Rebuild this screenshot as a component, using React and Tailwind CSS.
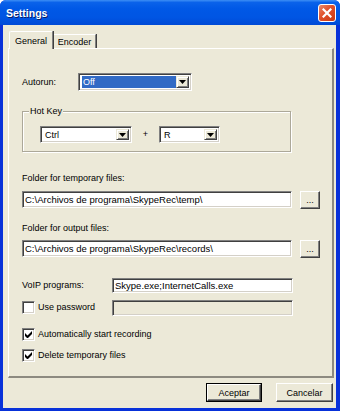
import React from "react";

const font = { fontFamily: '"Liberation Sans", Arial, sans-serif' };

function Arrow() {
  return (
    <svg width="7" height="4" viewBox="0 0 7 4">
      <path d="M0 0h7L3.5 4z" fill="#000" />
    </svg>
  );
}

function Combo({ w, h, text, selected }) {
  return (
    <div
      className={`flex bg-white border border-t-[#808080] border-l-[#808080] border-r-white border-b-white shadow-[inset_1px_1px_0_#404040,inset_-1px_-1px_0_#d4d0c8] p-[2px] ${w} ${h}`}
    >
      <div className="flex-1 flex items-center pl-[1px]">
        <span
          className={`leading-[12px] text-[9px] px-[1px] w-full h-full flex items-center ${
            selected ? "bg-[#316ac5] text-white" : "text-black"
          }`}
        >
          {text}
        </span>
      </div>
      <div className="w-[13px] flex items-center justify-center bg-[#ece9d8] border border-t-[#ece9d8] border-l-[#ece9d8] border-r-[#404040] border-b-[#404040] shadow-[inset_1px_1px_0_#fff,inset_-1px_-1px_0_#808080]">
        <Arrow />
      </div>
    </div>
  );
}

function TextBox({ w, h, text, disabled }) {
  return (
    <div
      className={`flex items-center border border-t-[#808080] border-l-[#808080] border-r-white border-b-white shadow-[inset_1px_1px_0_#404040,inset_-1px_-1px_0_#d4d0c8] px-[2px] ${
        disabled ? "bg-[#ece9d8]" : "bg-white"
      } ${w} ${h}`}
    >
      <span className="text-[9.5px] leading-[11px] text-black whitespace-nowrap">{text}</span>
    </div>
  );
}

function Button({ w, h, children, isDefault }) {
  const inner = (
    <div className="flex-1 flex items-center justify-center bg-[#ece9d8] border border-t-white border-l-white border-r-[#404040] border-b-[#404040] shadow-[inset_-1px_-1px_0_#808080]">
      <span className="text-[9px] leading-[10px] text-black">{children}</span>
    </div>
  );
  return (
    <div className={`flex ${w} ${h} ${isDefault ? "border border-black" : ""}`}>{inner}</div>
  );
}

function Check({ checked }) {
  return (
    <div className="w-[13px] h-[13px] bg-white border border-t-[#808080] border-l-[#808080] border-r-white border-b-white shadow-[inset_1px_1px_0_#404040,inset_-1px_-1px_0_#d4d0c8] flex items-center justify-center">
      {checked && (
        <svg width="7" height="7" viewBox="0 0 7 7">
          <path d="M0 2v3l2 2h1l4-4V0L2.5 4.5z" fill="#000" />
        </svg>
      )}
    </div>
  );
}

export default function App() {
  return (
    <div style={font} className="w-[340px] h-[411px] flex flex-col bg-[#0831d9] rounded-t-[6px] overflow-hidden text-black">
      {/* Title bar */}
      <div className="h-[25px] flex items-center justify-between pl-[6px] pr-[4px] bg-[linear-gradient(to_bottom,#3d8ef5_0%,#0a62ea_10%,#0058e6_35%,#0055e3_70%,#004ad6_100%)]">
        <span className="text-white font-bold text-[10.5px] leading-[12px] [text-shadow:1px_1px_0_#0a1e6a]">
          Settings
        </span>
        <div className="w-[18px] h-[18px] rounded-[3px] border border-white bg-[linear-gradient(135deg,#e98a6c_0%,#e0502a_45%,#c93912_100%)] flex items-center justify-center">
          <svg width="10" height="10" viewBox="0 0 10 10">
            <path d="M1.5 1.5l7 7M8.5 1.5l-7 7" stroke="#fff" strokeWidth="2.2" strokeLinecap="square" />
          </svg>
        </div>
      </div>

      {/* Client */}
      <div className="h-[383px] ml-[3px] mr-[4px] bg-[#ece9d8] flex flex-col">
        {/* Tabs */}
        <div className="flex items-end pl-[6px] pt-[6px] h-[23px]">
          <div className="relative z-10 w-[44px] h-[18px] mb-[-1px] bg-[#ece9d8] border-t border-l border-white border-r border-r-[#808080] rounded-tl-[2px] shadow-[1px_0_0_#404040] flex items-center justify-center">
            <span className="text-[9px] leading-[10px]">General</span>
          </div>
          <div className="w-[42px] h-[14px] ml-[1px] bg-[#ece9d8] border-t border-white border-r border-r-[#808080] shadow-[1px_0_0_#404040] flex items-center justify-center">
            <span className="text-[9px] leading-[10px] pt-[1px]">Encoder</span>
          </div>
        </div>

        {/* Panel */}
        <div className="ml-[5px] w-[326px] h-[330px] border-t border-l border-white border-r-2 border-b-2 border-r-[#8d8a80] border-b-[#8d8a80] pl-[13px] flex flex-col">
          {/* Autorun */}
          <div className="mt-[24px] h-[18px] flex items-center">
            <span className="w-[56px] text-[9px] leading-[11px]">Autorun:</span>
            <Combo w="w-[114px]" h="h-[18px]" text="Off" selected />
          </div>

          {/* Hot Key group */}
          <div className="relative mt-[20px] w-[269px] h-[41px] border border-[#aca899] shadow-[inset_1px_1px_0_#fff,1px_1px_0_#fff] pl-[17px] pt-[14px] flex items-start">
            <span className="absolute left-[6px] top-[-7px] px-[1px] bg-[#ece9d8] text-[9px] leading-[12px]">
              Hot Key
            </span>
            <Combo w="w-[92px]" h="h-[17px]" text="Ctrl" />
            <span className="w-[27px] text-center text-[9px] leading-[17px]">+</span>
            <Combo w="w-[61px]" h="h-[17px]" text="R" />
          </div>

          {/* Temp folder */}
          <span className="mt-[20px] h-[12px] text-[9px] leading-[12px]">Folder for temporary files:</span>
          <div className="mt-[7px] h-[18px] flex items-start">
            <TextBox w="w-[270px]" h="h-[17px]" text="C:\Archivos de programa\SkypeRec\temp\" />
            <div className="ml-[8px]">
              <Button w="w-[20px]" h="h-[18px]">...</Button>
            </div>
          </div>

          {/* Output folder */}
          <span className="mt-[13px] h-[12px] text-[9px] leading-[12px]">Folder for output files:</span>
          <div className="mt-[6px] h-[18px] flex items-start">
            <TextBox w="w-[270px]" h="h-[17px]" text="C:\Archivos de programa\SkypeRec\records\" />
            <div className="ml-[8px]">
              <Button w="w-[20px]" h="h-[18px]">...</Button>
            </div>
          </div>

          {/* VoIP */}
          <div className="mt-[20px] h-[15px] flex items-center">
            <span className="w-[90px] text-[9px] leading-[11px]">VoIP programs:</span>
            <TextBox w="w-[181px]" h="h-[15px]" text="Skype.exe;InternetCalls.exe" />
          </div>

          {/* Use password */}
          <div className="mt-[7px] h-[15px] flex items-center">
            <div className="w-[90px] flex items-center">
              <Check />
              <span className="ml-[3px] text-[9px] leading-[11px]">Use password</span>
            </div>
            <TextBox w="w-[181px]" h="h-[16px]" text="" disabled />
          </div>

          {/* Auto start */}
          <div className="mt-[13px] h-[13px] flex items-center">
            <Check checked />
            <span className="ml-[3px] text-[9px] leading-[11px]">Automatically start recording</span>
          </div>

          {/* Delete temp */}
          <div className="mt-[8px] h-[13px] flex items-center">
            <Check checked />
            <span className="ml-[3px] text-[9px] leading-[11px]">Delete temporary files</span>
          </div>
        </div>

        {/* Buttons */}
        <div className="mt-[5px] flex justify-end pr-[3px] gap-[14px]">
          <Button w="w-[56px]" h="h-[19px]" isDefault>
            Aceptar
          </Button>
          <Button w="w-[57px]" h="h-[19px]">Cancelar</Button>
        </div>
      </div>
    </div>
  );
}
